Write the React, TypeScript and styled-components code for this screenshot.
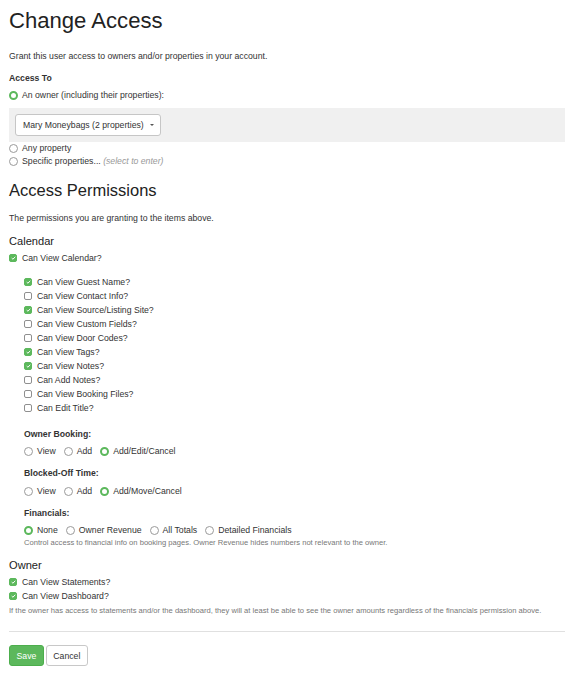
import styled, { createGlobalStyle } from "styled-components";

const GlobalStyle = createGlobalStyle`
  html, body {
    margin: 0;
    padding: 0;
    background: #fff;
  }
  body {
    font-family: "Liberation Sans", Arial, sans-serif;
    font-size: 8.7px;
    color: #333;
  }
`;

const green = "#5cb85c";

const Page = styled.div`
  padding: 0 0 20px 9px;
`;

const Title = styled.h1`
  margin: 8.5px 0 0;
  font-size: 22.1px;
  line-height: 24px;
  font-weight: 400;
  color: #222;
`;

const SubTitle = styled.h2`
  margin: 13.7px 0 0;
  font-size: 16.5px;
  line-height: 18px;
  font-weight: 400;
  color: #222;
`;

const Lead = styled.p<{ $top: number }>`
  margin: ${(p) => p.$top}px 0 0;
  line-height: 12px;
`;

const Label = styled.div<{ $top: number }>`
  margin-top: ${(p) => p.$top}px;
  font-weight: 700;
  line-height: 12px;
`;

const Group = styled.h4<{ $top: number }>`
  margin: ${(p) => p.$top}px 0 0;
  font-size: 11.1px;
  line-height: 13px;
  font-weight: 400;
  color: #222;
`;

const Help = styled.p<{ $top: number }>`
  margin: ${(p) => p.$top}px 0 0;
  font-size: 7.6px;
  line-height: 10px;
  color: #777;
`;

const Row = styled.label<{ $h?: number; $gap?: number }>`
  display: flex;
  align-items: center;
  gap: ${(p) => p.$gap ?? 5}px;
  height: ${(p) => p.$h ?? 14}px;
  line-height: ${(p) => p.$h ?? 14}px;
`;

const Box = styled.span<{ $on?: boolean }>`
  box-sizing: border-box;
  display: inline-flex;
  align-items: center;
  justify-content: center;
  width: 8px;
  height: 8px;
  border-radius: 2px;
  flex: none;
  background: ${(p) => (p.$on ? green : "#fff")};
  border: 1px solid ${(p) => (p.$on ? green : "#8f8f8f")};
`;

const Dot = styled.span<{ $on?: boolean }>`
  box-sizing: border-box;
  display: inline-block;
  width: 9px;
  height: 9px;
  border-radius: 50%;
  flex: none;
  background: #fff;
  border: ${(p) => (p.$on ? `2.5px solid ${green}` : "1px solid #9a9a9a")};
`;

const Inline = styled.div<{ $top: number }>`
  display: flex;
  gap: 8px;
  margin-top: ${(p) => p.$top}px;
`;

const Indented = styled.div`
  padding-left: 15px;
`;

const List = styled.div<{ $top: number }>`
  margin-top: ${(p) => p.$top}px;
`;

const Band = styled.div`
  margin-top: 7.3px;
  background: #f0f0f0;
  padding: 6px;
  height: 21.4px;
`;

const Select = styled.div`
  box-sizing: border-box;
  display: inline-flex;
  align-items: center;
  justify-content: space-between;
  width: 145.5px;
  height: 21.4px;
  padding: 0 6px 0 7px;
  background: #fff;
  border: 1px solid #c6c6c6;
  border-radius: 3px;
  color: #333;
`;

const Caret = styled.span`
  width: 0;
  height: 0;
  border-left: 2.5px solid transparent;
  border-right: 2.5px solid transparent;
  border-top: 2.5px solid #555;
`;

const Muted = styled.em`
  color: #999;
`;

const Rule = styled.hr`
  margin: 15.6px 0 0;
  border: 0;
  border-top: 1px solid #e0e0e0;
`;

const Actions = styled.div`
  display: flex;
  gap: 2px;
  margin-top: 13px;
`;

const Button = styled.button<{ $primary?: boolean }>`
  box-sizing: border-box;
  height: 21px;
  padding: 0 6.5px;
  font-family: inherit;
  font-size: 8.7px;
  border-radius: 3px;
  cursor: pointer;
  color: ${(p) => (p.$primary ? "#fff" : "#333")};
  background: ${(p) => (p.$primary ? green : "#fff")};
  border: 1px solid ${(p) => (p.$primary ? "#4cae4c" : "#c8c8c8")};
`;

function Check({ on, label }: { on?: boolean; label: string }) {
  return (
    <Row>
      <Box $on={on}>
        {on && (
          <svg width="5" height="4" viewBox="0 0 5 4">
            <path d="M0.7 2.1 L1.9 3.2 L4.3 0.8" fill="none" stroke="#fff" strokeWidth="1" />
          </svg>
        )}
      </Box>
      {label}
    </Row>
  );
}

function Radio({ on, children, h }: { on?: boolean; children: React.ReactNode; h?: number }) {
  return (
    <Row $h={h} $gap={4}>
      <Dot $on={on} />
      {children}
    </Row>
  );
}

const calendarItems: [string, boolean][] = [
  ["Can View Guest Name?", true],
  ["Can View Contact Info?", false],
  ["Can View Source/Listing Site?", true],
  ["Can View Custom Fields?", false],
  ["Can View Door Codes?", false],
  ["Can View Tags?", true],
  ["Can View Notes?", true],
  ["Can Add Notes?", false],
  ["Can View Booking Files?", false],
  ["Can Edit Title?", false],
];

export default function App() {
  return (
    <Page>
      <GlobalStyle />
      <Title>Change Access</Title>
      <Lead $top={17.5}>Grant this user access to owners and/or properties in your account.</Lead>

      <Label $top={10}>Access To</Label>
      <List $top={5}>
        <Radio on h={12}>An owner (including their properties):</Radio>
      </List>
      <Band>
        <Select>
          Mary Moneybags (2 properties)
          <Caret />
        </Select>
      </Band>
      <Radio h={13}>Any property</Radio>
      <Radio h={13}>
        <span>
          Specific properties... <Muted>(select to enter)</Muted>
        </span>
      </Radio>

      <SubTitle>Access Permissions</SubTitle>
      <Lead $top={13}>The permissions you are granting to the items above.</Lead>

      <Group $top={10.6}>Calendar</Group>
      <List $top={3.4}>
        <Check on label="Can View Calendar?" />
      </List>

      <Indented>
        <List $top={10}>
          {calendarItems.map(([label, on]) => (
            <Check key={label} on={on} label={label} />
          ))}
        </List>

        <Label $top={13}>Owner Booking:</Label>
        <Inline $top={4}>
          <Radio>View</Radio>
          <Radio>Add</Radio>
          <Radio on>Add/Edit/Cancel</Radio>
        </Inline>

        <Label $top={9}>Blocked-Off Time:</Label>
        <Inline $top={5}>
          <Radio>View</Radio>
          <Radio>Add</Radio>
          <Radio on>Add/Move/Cancel</Radio>
        </Inline>

        <Label $top={9}>Financials:</Label>
        <Inline $top={4}>
          <Radio on>None</Radio>
          <Radio>Owner Revenue</Radio>
          <Radio>All Totals</Radio>
          <Radio>Detailed Financials</Radio>
        </Inline>
        <Help $top={0.4}>
          Control access to financial info on booking pages. Owner Revenue hides numbers not relevant to the owner.
        </Help>
      </Indented>

      <Group $top={10.9}>Owner</Group>
      <List $top={3.7}>
        <Check on label="Can View Statements?" />
        <Check on label="Can View Dashboard?" />
      </List>
      <Help $top={2.4}>
        If the owner has access to statements and/or the dashboard, they will at least be able to see the owner amounts regardless of the financials permission above.
      </Help>

      <Rule />
      <Actions>
        <Button $primary>Save</Button>
        <Button>Cancel</Button>
      </Actions>
    </Page>
  );
}
